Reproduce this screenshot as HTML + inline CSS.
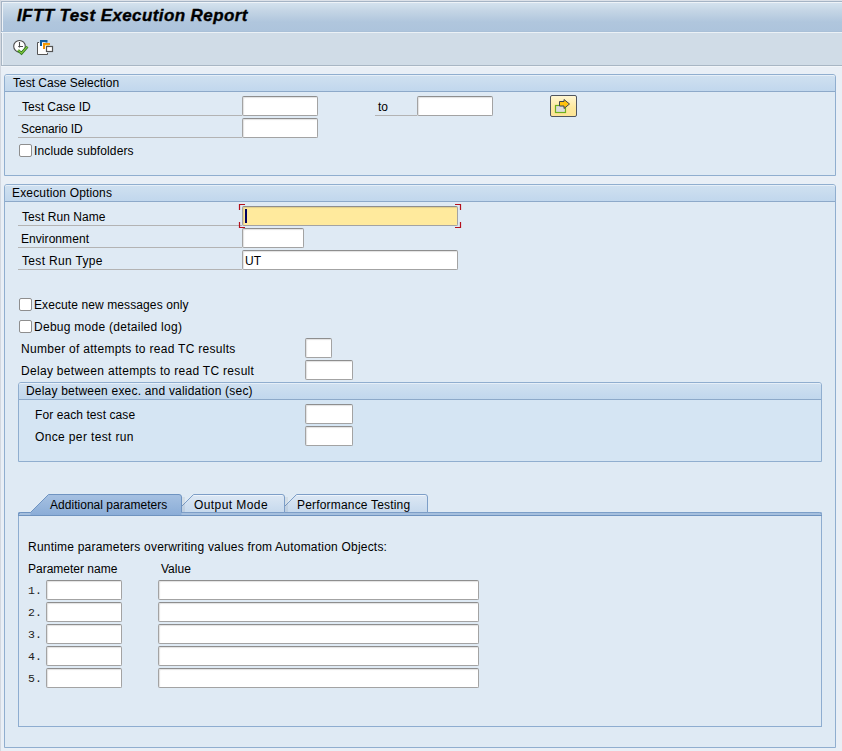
<!DOCTYPE html>
<html><head><meta charset="utf-8">
<style>
*{box-sizing:border-box}
html,body{margin:0;padding:0}
body{width:842px;height:751px;overflow:hidden;position:relative;background:#e9eff6;font-family:"Liberation Sans",sans-serif;font-size:12px;color:#000}
.a{position:absolute}
.t{position:absolute;white-space:pre;line-height:14px;font-size:12px;color:#000}
.grp{position:absolute;border:1px solid #90aecf;background:#dfeaf4;border-radius:3px 3px 0 0}
.gh{position:absolute;left:0;top:0;right:0;height:17px;background:linear-gradient(#cfe0f0,#c1d7ed);border-bottom:1px solid #8da9c9;border-top:1px solid #e6eff8;border-radius:2px 2px 0 0}
.ul{position:absolute;height:1px;background:#b3b3b3}
.in{position:absolute;background:#fff;border:1px solid #a3a3a3;border-top-color:#8e8e8e;height:20px;box-shadow:inset 1px 1px 1px rgba(0,0,0,.12);border-radius:2px}
.cb{position:absolute;width:13px;height:13px;background:#fff;border:1px solid #8e8e8e;border-radius:2px}
.mono{font-family:"Liberation Mono",monospace;font-size:11.5px;color:#222}
</style></head><body>
<div class="a" style="left:0px;top:0px;width:842px;height:33px;background:linear-gradient(#d4e2ee 3px,#c4d5e5 11px,#b0c6dd 22px,#adc4dc 31px);"></div>
<div class="a" style="left:0px;top:0px;width:842px;height:1px;background:#dde2e9;"></div>
<div class="a" style="left:0px;top:1px;width:842px;height:1px;background:#a5b4c5;"></div>
<div class="a" style="left:0px;top:2px;width:842px;height:1px;background:#eef3f8;"></div>
<div class="a" style="left:0px;top:31px;width:842px;height:1px;background:#a9c0d8;"></div>
<div class="a" style="left:1px;top:1px;width:1px;height:31px;background:#a5b4c5;"></div>
<div class="a" style="left:2px;top:2px;width:1px;height:29px;background:#eef3f8;"></div>
<div class="a" style="left:0px;top:32px;width:842px;height:1px;background:#ebf1f6;"></div>
<div class="t" style="left:17px;top:6px;letter-spacing:0.4px;font-size:17px;line-height:19px;font-weight:bold;font-style:italic;-webkit-text-stroke:0.35px #000">IFTT Test Execution Report</div>
<div class="a" style="left:0px;top:33px;width:842px;height:32px;background:#d0dce7;"></div>
<div class="a" style="left:1px;top:33px;width:1px;height:33px;background:#a8b6c4;"></div>
<div class="a" style="left:2px;top:33px;width:1px;height:32px;background:#eef3f8;"></div>
<div class="a" style="left:0px;top:65px;width:842px;height:1px;background:#a8b6c4;"></div>
<div class="a" style="left:0px;top:66px;width:842px;height:1px;background:#f1f5f9;"></div>
<div class="a" style="left:0px;top:0px;width:1px;height:751px;background:#d3d8e0;"></div>
<svg class="a" style="left:0;top:33px" width="60" height="32" viewBox="0 33 60 32">
<circle cx="19.5" cy="46.3" r="5.8" fill="#fff" stroke="#4d4d4d" stroke-width="1.1"/>
<path d="M19.5 42 V47.5 M18.2 46.5 H23" stroke="#4d4d4d" stroke-width="1.1" fill="none"/>
<path d="M18 50.2 L21.5 53.2 L27.4 46.6" stroke="#2f7a22" stroke-width="2.8" fill="none" stroke-linejoin="miter"/>
<path d="M18 50.2 L21.5 53.2 L27.4 46.6" stroke="#86c83c" stroke-width="1.1" fill="none"/>
<path d="M39 42.5 H37.5 V54.5 H47.5 V53" stroke="#555" stroke-width="1" fill="none"/>
<rect x="38" y="43" width="9" height="11" fill="#fdfdfd"/>
<path d="M41 46 V41 H46.5 V42.5" stroke="#0d5c9e" stroke-width="2" fill="none"/>
<path d="M44 49 V44 H50" stroke="#f39200" stroke-width="2" fill="none"/>
<path d="M45 45 H49" stroke="#ffc000" stroke-width="0.8" fill="none"/>
<rect x="46.5" y="46.5" width="6" height="5" fill="#fff" stroke="#555" stroke-width="1.2"/>
</svg>
<div class="grp" style="left:4px;top:74px;width:832px;height:102px"><div class="gh"></div></div>
<div class="t" style="left:13px;top:76px">Test Case Selection</div>
<div class="ul" style="left:18px;top:115px;width:224px"></div>
<div class="t" style="left:22px;top:100px">Test Case ID</div>
<div class="in" style="left:242px;top:96px;width:76px"></div>
<div class="ul" style="left:375px;top:115px;width:42px"></div>
<div class="t" style="left:378px;top:100px">to</div>
<div class="in" style="left:417px;top:96px;width:76px"></div>
<div class="ul" style="left:18px;top:137px;width:224px"></div>
<div class="t" style="left:21px;top:122px;letter-spacing:-0.1px">Scenario ID</div>
<div class="in" style="left:242px;top:118px;width:76px"></div>
<div class="cb" style="left:19px;top:144px"></div>
<div class="t" style="left:34px;top:144px;letter-spacing:0.13px">Include subfolders</div>
<div class="a" style="left:550px;top:95px;width:27px;height:22px;border:1px solid #50555f;border-radius:2px;background:linear-gradient(#fff6d2,#fde89c 60%,#fde595)"></div>
<svg class="a" style="left:550px;top:95px" width="27" height="22" viewBox="550 95 27 22">
<rect x="555.5" y="105.5" width="10" height="7" fill="#dcdcdc" stroke="#6fb01e" stroke-width="1.2"/>
<path d="M559.5 106 V101.5 H564 V99.5 L569.5 104 L564 108.5 V106 H559.5 Z" fill="#ffc20e" stroke="#3d4450" stroke-width="1" stroke-linejoin="miter"/>
</svg>
<div class="grp" style="left:4px;top:184px;width:832px;height:564px"><div class="gh"></div></div>
<div class="t" style="left:12px;top:186px;letter-spacing:0.16px">Execution Options</div>
<div class="ul" style="left:18px;top:225px;width:224px"></div>
<div class="t" style="left:22px;top:210px;letter-spacing:0.07px">Test Run Name</div>
<div class="in" style="left:242px;top:206px;width:216px;background:#ffea9d"></div>
<div class="ul" style="left:18px;top:247px;width:224px"></div>
<div class="t" style="left:21px;top:232px;letter-spacing:0.06px">Environment</div>
<div class="in" style="left:242px;top:228px;width:62px"></div>
<div class="ul" style="left:18px;top:269px;width:224px"></div>
<div class="t" style="left:22px;top:254px;letter-spacing:0.33px">Test Run Type</div>
<div class="in" style="left:242px;top:250px;width:216px"></div>
<div class="t" style="left:245px;top:254px;letter-spacing:0.2px">UT</div>
<svg class="a" style="left:236px;top:202px" width="228" height="28" viewBox="236 202 228 28">
<path d="M245 204.5 H239.5 V210 M245 227.5 H239.5 V222 M455 204.5 H460.5 V210 M455 227.5 H460.5 V222" stroke="#b4101c" stroke-width="1.2" fill="none"/>
<rect x="245" y="209" width="2" height="14" fill="#000060"/>
</svg>
<div class="cb" style="left:19px;top:298px"></div>
<div class="t" style="left:34px;top:298px;letter-spacing:0.1px">Execute new messages only</div>
<div class="cb" style="left:19px;top:320px"></div>
<div class="t" style="left:34px;top:320px;letter-spacing:0.27px">Debug mode (detailed log)</div>
<div class="t" style="left:21px;top:342px;letter-spacing:0.29px">Number of attempts to read TC results</div>
<div class="in" style="left:305px;top:338px;width:27px"></div>
<div class="t" style="left:21px;top:364px;letter-spacing:0.3px">Delay between attempts to read TC result</div>
<div class="in" style="left:305px;top:360px;width:48px"></div>
<div class="grp" style="left:18px;top:382px;width:804px;height:80px;background:#d5e5f3"><div class="gh"></div></div>
<div class="t" style="left:26px;top:384px;letter-spacing:0.2px">Delay between exec. and validation (sec)</div>
<div class="t" style="left:35px;top:408px;letter-spacing:0.08px">For each test case</div>
<div class="in" style="left:305px;top:404px;width:48px"></div>
<div class="t" style="left:35px;top:430px;letter-spacing:0.36px">Once per test run</div>
<div class="in" style="left:305px;top:426px;width:48px"></div>
<div class="a" style="left:18px;top:513px;width:804px;height:214px;border:1px solid #8eadd0;border-top:none;background:#dfeaf4"></div>
<svg class="a" style="left:0;top:488px" width="842" height="30" viewBox="0 488 842 30">
<defs>
<linearGradient id="gi" x1="0" y1="0" x2="0" y2="1"><stop offset="0" stop-color="#dde8f4"/><stop offset="1" stop-color="#c6d9ed"/></linearGradient>
<linearGradient id="ga" x1="0" y1="0" x2="0" y2="1"><stop offset="0" stop-color="#a6c1e2"/><stop offset="1" stop-color="#8badd7"/></linearGradient>
</defs>
<rect x="18" y="512" width="804" height="4" fill="#a6c0de"/>
<path d="M18.5 516 V514.5 Q18.5 512.5 20.5 512.5 H819.5 Q821.5 512.5 821.5 514.5 V516" fill="none" stroke="#7c9fc8" stroke-width="1"/>
<path d="M278.5 512.5 L296.5 494.5 H425 Q427.5 494.5 427.5 497 V512.5 Z" fill="url(#gi)" stroke="#7d9ec7"/>
<path d="M297 495.5 H425.5" fill="none" stroke="#f2f7fc" stroke-width="1" opacity="0.8"/>
<path d="M175.5 512.5 L193.5 494.5 H282 Q284.5 494.5 284.5 497 V512.5 Z" fill="url(#gi)" stroke="#7d9ec7"/>
<path d="M194 495.5 H282.5" fill="none" stroke="#f2f7fc" stroke-width="1" opacity="0.8"/>
<rect x="285" y="497" width="3" height="15" fill="#000" opacity="0.05"/>
<rect x="182" y="497" width="3" height="15" fill="#000" opacity="0.05"/>
<path d="M30.5 512.5 L48.5 494.5 H179 Q181.5 494.5 181.5 497 V515 H30.5 Z" fill="url(#ga)" stroke="none"/>
<path d="M18.5 516 V514.5 Q18.5 512.5 20.5 512.5 H30.5 L48.5 494.5 H179 Q181.5 494.5 181.5 497 V512.5" fill="none" stroke="#6f94c1"/>
<rect x="18" y="515" width="804" height="1" fill="#6f93bf"/>
</svg>
<div class="t" style="left:50px;top:498px;letter-spacing:0.03px">Additional parameters</div>
<div class="t" style="left:194px;top:498px;letter-spacing:0.42px">Output Mode</div>
<div class="t" style="left:297px;top:498px;letter-spacing:0.18px">Performance Testing</div>
<div class="t" style="left:28px;top:540px;letter-spacing:0.21px">Runtime parameters overwriting values from Automation Objects:</div>
<div class="t" style="left:28px;top:562px">Parameter name</div>
<div class="t" style="left:161px;top:562px">Value</div>
<div class="t mono" style="left:28px;top:584px">1.</div>
<div class="in" style="left:46px;top:580px;width:76px"></div>
<div class="in" style="left:158px;top:580px;width:321px"></div>
<div class="t mono" style="left:28px;top:606px">2.</div>
<div class="in" style="left:46px;top:602px;width:76px"></div>
<div class="in" style="left:158px;top:602px;width:321px"></div>
<div class="t mono" style="left:28px;top:628px">3.</div>
<div class="in" style="left:46px;top:624px;width:76px"></div>
<div class="in" style="left:158px;top:624px;width:321px"></div>
<div class="t mono" style="left:28px;top:650px">4.</div>
<div class="in" style="left:46px;top:646px;width:76px"></div>
<div class="in" style="left:158px;top:646px;width:321px"></div>
<div class="t mono" style="left:28px;top:672px">5.</div>
<div class="in" style="left:46px;top:668px;width:76px"></div>
<div class="in" style="left:158px;top:668px;width:321px"></div>
</body></html>
